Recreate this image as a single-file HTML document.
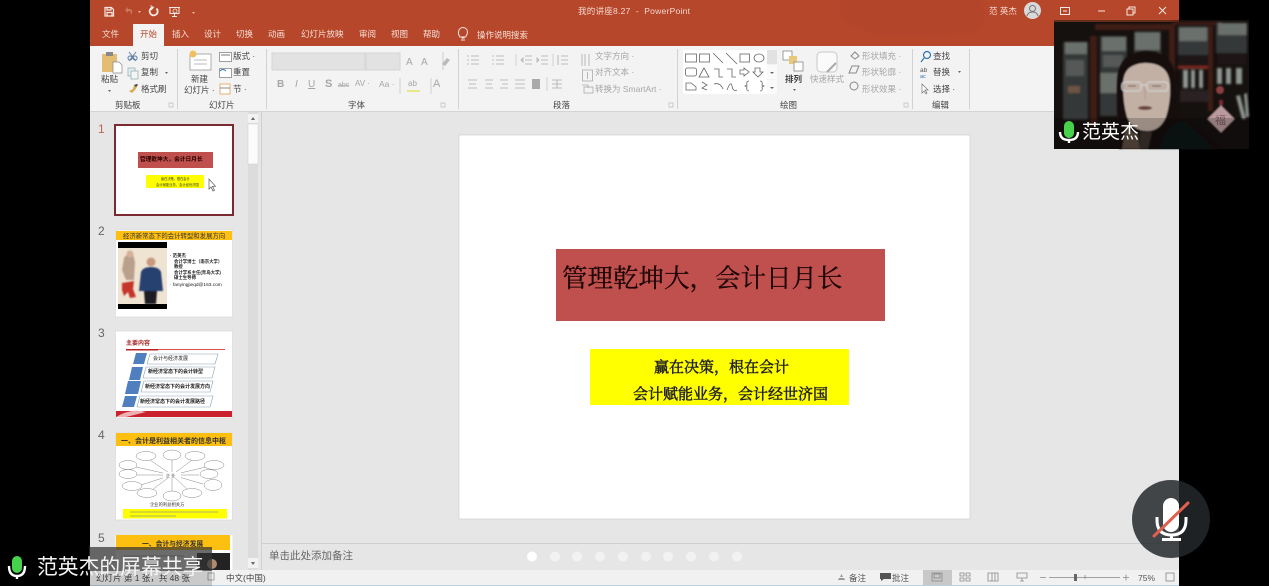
<!DOCTYPE html>
<html lang="zh">
<head>
<meta charset="utf-8">
<title>我的讲座8.27 - PowerPoint</title>
<style>
html,body{margin:0;padding:0;background:#000;width:1269px;height:586px;overflow:hidden}
svg{display:block;filter:blur(.35px)}
text{font-family:"Liberation Sans","Noto Sans CJK SC",sans-serif;white-space:pre}
.r text{font-size:8.5px;fill:#444}
.d text{font-size:8.5px;fill:#a6a6a6}
.g{fill:none;stroke:#666;stroke-width:.8}
.l{fill:none;stroke:#aaa;stroke-width:.8}
.t{fill:#f3d9d0;font-size:8.5px}
.n{fill:#666;font-size:12px}
.sf{font-family:"Noto Serif CJK SC",serif}
</style>
</head>
<body>
<svg width="1269" height="586" viewBox="0 0 1269 586" xmlns="http://www.w3.org/2000/svg">
<defs><filter id="b1"><feGaussianBlur stdDeviation="1"/></filter><filter id="b2"><feGaussianBlur stdDeviation=".8"/></filter></defs>
<rect width="1269" height="586" fill="#000"/>
<!-- app -->
<rect x="90" width="1089" height="586" fill="#e6e6e6"/>
<rect x="90" width="1089" height="46" fill="#b7472a"/>
<path d="M840 0h140q10 20-5 32q-70 6-100 2q-40-10-35-34z" fill="#b3452a" filter="url(#b1)"/>
<rect x="90" y="46" width="1089" height="65" fill="#f3f3f3"/>
<rect x="90" y="111" width="1089" height="1" fill="#d4d4d4"/>
<rect x="133" y="24" width="31" height="22" fill="#f3f3f3"/>

<!-- QAT -->
<g fill="none" stroke="#f5e8e2" stroke-width="1.2">
<path d="M105 7.500h6.500l2 2v6.500h-8.500z"/><path d="M107 7.500v2.500h4v-2.500M107 16v-3.500h5v3.500"/>
<path d="M156.500 8.500a4 4 0 1 1-4-1" stroke-width="1.800"/><path d="M150.500 5.500l3 2-2.500 2.500" stroke-width="1"/>
<path d="M169 7.500h11M170 7.500v6h9v-6M174.500 13.500v3M172 16.500h5" stroke-width="1"/>
</g>
<circle cx="175" cy="11" r="2" fill="none" stroke="#f5e8e2" stroke-width=".8"/>
<path d="M125 10l3-3v2h2q3 1 2 4l-1 2q0-4-2-4h-1v2z" fill="#c9765e"/>
<path d="M138 11h3l-1.500 2zM192 12h3l-1.500 2z" fill="#e8b8a8"/>
<text class="t" x="578" y="14" textLength="112" lengthAdjust="spacing">我的讲座8.27  -  PowerPoint</text>
<text class="t" x="989" y="14">范 英杰</text>
<circle cx="1032.500" cy="10.500" r="8.500" fill="#d9d9d9"/>
<circle cx="1032.500" cy="8.500" r="3" fill="none" stroke="#777"/>
<path d="M1027 16q1-4 5.500-4t5.500 4" fill="none" stroke="#777"/>
<g fill="none" stroke="#f5e8e2" stroke-width="1">
<rect x="1060.500" y="7.500" width="9" height="7"/>
<path d="M1063 11h4M1098 11h7"/>
<rect x="1127" y="9" width="6" height="6"/><path d="M1129 9V7h6v6h-2"/>
<path d="M1159 7l7 7M1166 7l-7 7"/>
</g>

<!-- tabs -->
<g font-size="8.500" fill="#f5dfd7">
<text x="102" y="37">文件</text><text x="172" y="37">插入</text><text x="204" y="37">设计</text><text x="236" y="37">切换</text>
<text x="268" y="37">动画</text><text x="301" y="37">幻灯片放映</text><text x="359" y="37">审阅</text><text x="391" y="37">视图</text>
<text x="423" y="37">帮助</text><text x="477" y="38">操作说明搜索</text>
</g>
<text x="140" y="37" font-size="8.500" fill="#b7472a">开始</text>
<path d="M461 40h4M461.500 38h3M460 37q-2-3-1.500-5a4.500 4.500 0 0 1 9 0q0 2-2 5z" fill="none" stroke="#f5e8e2"/>

<!-- ribbon separators -->
<g fill="#d2d2d2">
<rect x="177" y="49" width="1" height="60"/><rect x="266" y="49" width="1" height="60"/><rect x="458" y="49" width="1" height="60"/>
<rect x="677" y="49" width="1" height="60"/><rect x="912" y="49" width="1" height="60"/><rect x="969" y="49" width="1" height="60"/>
</g>

<!-- clipboard -->
<rect x="102" y="54" width="15" height="18" fill="#e3bd74"/><rect x="106" y="52" width="7" height="4" fill="#888"/>
<path d="M113 62h6l3 3v8h-9z" fill="#fff" stroke="#888" stroke-width=".7"/>
<path d="M129 52l7 9M136 52l-7 9" stroke="#5f7fa6" fill="none"/><circle cx="130" cy="58" r="2" fill="none" stroke="#5f7fa6"/><circle cx="135" cy="58" r="2" fill="none" stroke="#5f7fa6"/>
<rect x="128" y="68" width="7" height="8" fill="#e8eef4" stroke="#8aa" stroke-width=".7"/><rect x="131" y="71" width="7" height="8" fill="#f5f5f5" stroke="#8aa" stroke-width=".7"/>
<path d="M129 91l4-2 1-4 3 2-2 3-3 3z" fill="#d8ab4c"/><path d="M134 85l3-1 1 1-2 2z" fill="#444"/>
<g class="r">
<text x="141" y="59">剪切</text><text x="141" y="75">复制</text><text x="141" y="92">格式刷</text>
<text x="101" y="82">粘贴</text><text x="191" y="82">新建</text><text x="184" y="93">幻灯片 ·</text>
<text x="233" y="59">版式 ·</text><text x="233" y="75">重置</text><text x="233" y="92">节 ·</text>
<text x="115" y="108">剪贴板</text><text x="209" y="108">幻灯片</text><text x="348" y="108">字体</text>
<text x="553" y="108">段落</text><text x="780" y="108">绘图</text><text x="932" y="108">编辑</text>
<text x="933" y="59">查找</text><text x="933" y="75">替换</text><text x="933" y="92">选择 ·</text>
<text x="785" y="82" font-weight="bold">排列</text>
</g>
<path d="M165 72h3l-1.500 2zM108 90h3l-1.500 2zM958 71h3l-1.500 2zM793 89h3l-1.500 2z" fill="#666"/>

<!-- slides group -->
<rect x="190" y="54" width="21" height="16" fill="#fff" stroke="#999" stroke-width=".8"/><path d="M194 60h13M194 64h13" stroke="#bbb"/>
<circle cx="193" cy="54" r="3.500" fill="#f0c060"/>
<rect x="219.500" y="52.500" width="12" height="9" fill="#fff" stroke="#888" stroke-width=".8"/><rect x="221" y="54" width="9" height="2" fill="#bbb"/>
<rect x="219.500" y="68.500" width="12" height="9" fill="#fff" stroke="#888" stroke-width=".8"/><path d="M220 71q3-3 6 0" stroke="#2e75b6" fill="none"/>
<rect x="220" y="84" width="10" height="10" fill="#fff" stroke="#e0a050" stroke-width=".8"/><path d="M220 88h10" stroke="#888"/>

<!-- font group -->
<rect x="272" y="53" width="93" height="17" fill="#e2e2e2" stroke="#d6d6d6"/><rect x="366" y="53" width="34" height="17" fill="#e2e2e2" stroke="#d6d6d6"/>
<g class="d">
<text x="406" y="65" style="font-size:10px">A</text><text x="421" y="65" style="font-size:10px">A</text>
<text x="277" y="87" font-weight="bold" style="font-size:10px">B</text><text x="295" y="87" font-style="italic" style="font-size:10px">I</text>
<text x="308" y="87" style="font-size:10px" text-decoration="underline">U</text><text x="325" y="87" style="font-size:11px" font-weight="bold">S</text>
<text x="338" y="87" style="font-size:7px" text-decoration="line-through">abc</text><text x="355" y="86" style="font-size:8px">AV ·</text>
<text x="379" y="87">Aa ·</text><text x="408" y="86" style="font-size:8px">ab</text><text x="433" y="87" style="font-size:11px">A</text>
<text x="595" y="59">文字方向 ·</text><text x="595" y="75">对齐文本 ·</text><text x="595" y="92">转换为 SmartArt ·</text>
<text x="810" y="82">快速样式</text>
<text x="862" y="59">形状填充 ·</text><text x="862" y="75">形状轮廓 ·</text><text x="862" y="92">形状效果 ·</text>
</g>
<rect x="407" y="90" width="13" height="2" fill="#e8e88a"/>
<path d="M431 78v16M400 78v16M443 52v18" stroke="#cfcfcf" fill="none"/>
<path d="M442 64l5-6 3 2-5 6z" fill="#bbb"/>
<!-- paragraph -->
<g class="l">
<path d="M471 56h8M471 60h8M471 64h8M467 56h2M467 60h2M467 64h2"/>
<path d="M496 56h8M496 60h8M496 64h8M492 56h2M492 60h2M492 64h2"/>
<path d="M525 56h7M525 60h7M525 64h7M521 60l2-2v4zM541 56h7M541 60h7M541 64h7M537 58l2 2-2 2z"/>
<path d="M561 56h7M561 60h7M561 64h7M558 55v10"/>
<path d="M468 80h9M469 84h7M468 88h9M485 80h8M486 84h6M485 88h8M500 80h8M502 84h6M500 88h8M515 80h10M515 84h10M515 88h10M552 80h10M552 84h10M552 88h10M557 80v8"/>
<path d="M582 54v12M585 54v12M589 54v12"/>
<rect x="582.500" y="70" width="10" height="11"/><path d="M587.500 72v7"/>
<rect x="584" y="87" width="9" height="6"/><path d="M582 85h6v3"/>
</g>
<rect x="532" y="79" width="8" height="10" fill="#aaa"/>
<path d="M547 77v14M516 54v12M553 54v12" stroke="#d2d2d2"/>
<!-- gallery -->
<rect x="683" y="50" width="84" height="44" fill="#fff"/><rect x="767" y="50" width="10" height="14" fill="#e2e2e2"/><rect x="767" y="65" width="10" height="14" fill="#fafafa"/><rect x="767" y="80" width="10" height="14" fill="#fafafa"/>
<path d="M770 72h4l-2 2zM770 87h4l-2 2z" fill="#666"/>
<g class="g">
<rect x="685.500" y="54" width="11" height="8"/><rect x="699.500" y="54" width="10" height="8"/>
<path d="M713 53l10 10M726 53l11 11"/><rect x="740" y="54" width="9.500" height="8"/><ellipse cx="759" cy="58" rx="5" ry="4"/>
<rect x="685.500" y="68" width="11" height="8" rx="2"/><path d="M699 77l5-9 5 9zM714 69h5v8h4M727 69h5v8h4M740 70h4v-2l5 4-5 4v-2h-4zM755 68h5v4h3l-5 5-5-5h2z"/>
<path d="M686 90v-7h5l5 4v3zM702 82l5 3-5 3 5 2M714 84q6-2 9 5M727 90q4-10 5-4t5 4M749 81q-3 0-2 4l-2 1 2 1q-1 4 2 4M760 81q3 0 2 4l2 1-2 1q1 4-2 4"/>
</g>
<rect x="783" y="51" width="9" height="9" fill="#fff" stroke="#888" stroke-width=".8"/><rect x="789" y="56" width="8" height="8" fill="#e8c87c"/><rect x="794" y="62" width="9" height="9" fill="#fff" stroke="#888" stroke-width=".8"/>
<rect x="817" y="52" width="20" height="20" rx="4" fill="#fafafa" stroke="#c8c8c8"/><path d="M827 72l9-9" stroke="#aaa" stroke-width="2"/>
<path d="M851 56l4-4 4 4-4 3zM849 73l3-7h7l-3 7zM850 86a4 4 0 1 1 8 0a4 4 0 0 1-8 0" fill="none" stroke="#888"/>
<!-- edit -->
<circle cx="927" cy="55" r="3.500" fill="none" stroke="#2e75b6" stroke-width="1.200"/><path d="M924 58l-3 4" stroke="#2e75b6" stroke-width="1.200"/>
<text x="920" y="72" font-size="6.500" fill="#555">ab</text><text x="920" y="78" font-size="5.500" fill="#2e75b6">ac</text>
<path d="M922 84v9l2-2 2 3 1-1-2-3h3z" fill="#fff" stroke="#777" stroke-width=".7"/>
<path d="M169 103h4v4h-4zM441 103h4v4h-4zM669 103h4v4h-4zM904 103h4v4h-4z" fill="none" stroke="#bbb" stroke-width=".7"/>

<!-- thumbs pane -->
<rect x="248" y="112" width="10" height="458" fill="#dcdcdc"/>
<rect x="248" y="124" width="10" height="40" fill="#fbfbfb" stroke="#cfcfcf" stroke-width=".5"/>
<rect x="248" y="114" width="10" height="9" fill="#f2f2f2"/><path d="M251 120l2-3 2 3z" fill="#666"/>
<rect x="248" y="558" width="10" height="10" fill="#f2f2f2"/><path d="M251 562l2 3 2-3z" fill="#666"/>
<rect x="261" y="112" width="1" height="458" fill="#d0d0d0"/>

<text x="98" y="133" class="n" style="fill:#c0654d">1</text><text x="98" y="235" class="n">2</text><text x="98" y="337" class="n">3</text><text x="98" y="439" class="n">4</text><text x="98" y="542" class="n">5</text>

<!-- thumb 1 -->
<rect x="115" y="125" width="118" height="90" fill="#fff" stroke="#7a2a30" stroke-width="2"/>
<rect x="138" y="152" width="75" height="16" fill="#c0504d"/>
<text x="140" y="161" font-size="5.700" font-weight="bold" fill="#200">管理乾坤大，会计日月长</text>
<rect x="146" y="175" width="58" height="13" fill="#ffff00"/>
<text x="161" y="180" font-size="3.200" fill="#333">赢在决策，根在会计</text>
<text x="156" y="186" font-size="3.300" fill="#333">会计赋能业务，会计经世济国</text>
<path d="M209 179v10l2-2 2 4 1.500-.7-2-4h3z" fill="#fff" stroke="#555" stroke-width=".7"/>

<!-- thumb 2 -->
<rect x="115.500" y="230" width="117" height="87" fill="#fff" stroke="#d6d6d6" stroke-width=".6"/>
<rect x="116" y="231" width="116" height="9" fill="#fdbf10"/>
<text x="123" y="238" font-size="6.400" fill="#333">经济新常态下的会计转型和发展方向</text>
<rect x="118" y="242" width="49" height="6" fill="#000"/>
<rect x="118" y="248" width="49" height="56" fill="#efe4d2"/>
<rect x="118" y="304" width="49" height="5" fill="#000"/>
<g filter="url(#b2)">
<path d="M124 258q4-6 9-4l2 8-1 18h-8l-4-10z" fill="#b9a08d"/>
<circle cx="130" cy="254" r="3.500" fill="#d5b09a"/>
<path d="M122 283l12-2-1 8 3 8-6 1-2-6-4 4-2-6z" fill="#c5352b"/>
<circle cx="151" cy="262" r="4.500" fill="#c79a80"/>
<path d="M141 272q2-5 10-5t10 5l2 19h-24z" fill="#26406f"/>
<path d="M144 291h13l-1 13h-11z" fill="#1e1e24"/>
</g>
<g font-size="4.400" fill="#222" font-weight="bold">
<text x="170" y="257">· 范英杰</text>
<text x="174" y="263">会计学博士（南京大学）</text>
<text x="174" y="268">教授</text>
<text x="174" y="274">会计学系主任(青岛大学)</text>
<text x="174" y="279">硕士生导师</text>
<text x="170" y="286" font-weight="normal" font-size="4.800">· fanyingjieqd@163.com</text>
</g>

<!-- thumb 3 -->
<rect x="115.500" y="331" width="117" height="87" fill="#fff" stroke="#d6d6d6" stroke-width=".6"/>
<text x="126" y="345" font-size="6" font-weight="bold" fill="#a52a2a">主要内容</text>
<rect x="126" y="349" width="99" height="1" fill="#d65050"/><rect x="126" y="349" width="32" height="1.500" fill="#b22"/>
<g fill="#4f7fbf">
<path d="M136 353h11l-3 11h-11z"/><path d="M132 367h11l-3 13h-11z"/><path d="M128 381h13l-3 13h-13z"/><path d="M125 396h12l-3 11h-12z"/>
</g>
<g fill="#fff" stroke="#8aa0b8" stroke-width=".6">
<path d="M150 354h68l-3 10h-68z"/><path d="M146 367h69l-3 11h-69z"/><path d="M144 381h69l-3 11h-69z"/><path d="M140 396h73l-3 11h-73z"/>
</g>
<g font-size="5" fill="#222" font-weight="bold">
<text x="153" y="360" font-weight="normal">会计与经济发展</text><text x="148" y="373">新经济常态下的会计转型</text><text x="145" y="388">新经济常态下的会计发展方向</text><text x="140" y="403">新经济常态下的会计发展路径</text>
</g>
<rect x="116" y="411" width="116" height="6" fill="#c9222e"/><path d="M116 417q15-9 30-5l-20 5z" fill="#eeb0b0"/>

<!-- thumb 4 -->
<rect x="115.500" y="433" width="117" height="87" fill="#fff" stroke="#d6d6d6" stroke-width=".6"/>
<rect x="116" y="433" width="116" height="13" fill="#fdbf10"/>
<text x="121" y="443" font-size="7" font-weight="bold" fill="#333">一、会计是利益相关者的信息中枢</text>
<g fill="#fff" stroke="#888" stroke-width=".5">
<path d="M172 475V460M172 475L150 460M172 475L192 460M172 475L136 467M172 475L206 467M172 475H136M172 475H199M172 475L141 485M172 475L203 484M172 475L152 490M172 475V491M172 475L188 490" fill="none"/>
<ellipse cx="172" cy="455" rx="9" ry="5"/><ellipse cx="146" cy="456" rx="10" ry="4.500"/><ellipse cx="195" cy="456" rx="10" ry="4.500"/>
<ellipse cx="128" cy="465" rx="9" ry="4.500"/><ellipse cx="214" cy="465" rx="10" ry="4.500"/><ellipse cx="128" cy="474" rx="9" ry="4.500"/>
<ellipse cx="209" cy="474" rx="9" ry="4.500"/><ellipse cx="132" cy="486" rx="10" ry="4.500"/><ellipse cx="213" cy="485" rx="9" ry="5.500"/>
<ellipse cx="147" cy="493" rx="10" ry="4.500"/><ellipse cx="172" cy="496" rx="9" ry="5"/><ellipse cx="192" cy="493" rx="10" ry="4.500"/>
</g>
<rect x="163" y="472" width="18" height="6" fill="#fff"/>
<text x="166" y="477" font-size="4" fill="#333">企 业</text>
<text x="150" y="506" font-size="4.300" fill="#333">企业的利益相关方</text>
<rect x="123" y="509" width="104" height="9.500" fill="#ffff00"/>
<path d="M130 512h88M130 516h46" stroke="#998" stroke-width=".7"/>

<!-- thumb 5 -->
<rect x="115.500" y="535" width="117" height="35" fill="#fff"/>
<rect x="116" y="535" width="114" height="15" fill="#fdbf10"/>
<text x="142" y="546" font-size="6.800" font-weight="bold" fill="#333">一、会计与经济发展</text>
<rect x="197" y="553" width="33" height="17" fill="#222"/><circle cx="212" cy="564" r="5" fill="#b08a70"/>
<path d="M124 556h60" stroke="#aaa"/>

<!-- slide -->
<rect x="459" y="135" width="511" height="384" fill="#fff" stroke="#d4d4d4" stroke-width=".8"/>
<rect x="556" y="249" width="329" height="72" fill="#c0504d"/>
<text class="sf" x="562" y="287" font-size="25.500" fill="#1c0505" stroke="#1c0505" stroke-width=".3">管理乾坤大，会计日月长</text>
<rect x="590" y="349" width="259" height="56" fill="#ffff00"/>
<text class="sf" x="654" y="372" font-size="15" fill="#222" stroke="#222" stroke-width=".5">赢在决策，根在会计</text>
<text class="sf" x="633" y="399" font-size="15" fill="#222" stroke="#222" stroke-width=".5">会计赋能业务，会计经世济国</text>

<!-- notes -->
<rect x="262" y="543" width="917" height="1" fill="#cfcfcf"/>
<text x="269" y="559" font-size="10.500" fill="#666">单击此处添加备注</text>
<g fill="#f2f2f2">
<circle cx="532" cy="556.500" r="5" fill="#fff"/><circle cx="555" cy="556.500" r="5"/><circle cx="577" cy="556.500" r="5"/><circle cx="600" cy="556.500" r="5"/><circle cx="623" cy="556.500" r="5"/>
<circle cx="646" cy="556.500" r="5"/><circle cx="668" cy="556.500" r="5"/><circle cx="691" cy="556.500" r="5"/><circle cx="714" cy="556.500" r="5"/><circle cx="737" cy="556.500" r="5"/>
</g>

<!-- status bar -->
<rect x="90" y="570" width="1089" height="15" fill="#f1f1f1"/>
<rect x="90" y="585" width="1089" height="1" fill="#b5d0e0"/>
<text x="96" y="581" font-size="8.500" fill="#444">幻灯片 第 1 张，共 48 张</text>
<rect x="208" y="573" width="6" height="7" fill="none" stroke="#888" stroke-width=".7"/>
<text x="226" y="581" font-size="8.500" fill="#444">中文(中国)</text>
<path d="M838 580h7l-1-2h-5zM840 577h3l-1.500-3z" fill="#999"/>
<text x="849" y="581" font-size="8.500" fill="#555">备注</text>
<path d="M880 573h11v6h-7l-3 2v-2h-1z" fill="#555"/>
<text x="892" y="581" font-size="8.500" fill="#555">批注</text>
<rect x="923" y="570" width="29" height="15" fill="#c8c8c8"/>
<g fill="none" stroke="#888" stroke-width=".8">
<rect x="932" y="573" width="10" height="8"/><rect x="934" y="574" width="6" height="4"/>
<path d="M960 573h4v3h-4zM966 573h4v3h-4zM960 578h4v3h-4zM966 578h4v3h-4z"/>
<path d="M988 573h10v8h-10zM992 573v8M995 573v8"/>
<path d="M1017 573h10v5h-10zM1022 578v3M1020 581h4"/>
<path d="M1040 577.500h6M1049 577.500h71M1085 575v4M1123 577.500h6M1126 574.500v6"/>
<rect x="1166" y="573" width="8" height="8"/>
</g>
<rect x="1074" y="574" width="3" height="7" fill="#666"/>
<text x="1138" y="581" font-size="8.500" fill="#555">75%</text>

<!-- overlay bottom left -->
<rect x="89" y="547" width="123" height="24" fill="#333" opacity=".72"/>
<rect x="89" y="571" width="123" height="15" fill="#000" opacity=".16"/>
<text x="37" y="574" font-size="20.800" fill="#f4f4f4">范英杰的屏幕共享</text>
<rect x="12" y="556" width="10" height="17" rx="5" fill="#46d24a"/>
<path d="M9 566q0 10 8 10t8-10M17 576v3" fill="none" stroke="#fff" stroke-width="2.400"/>

<!-- video -->
<rect x="1054" y="20" width="195" height="129" fill="#15110f"/>
<rect x="1054" y="20" width="125" height="2" fill="#b7472a" opacity=".5"/>
<g filter="url(#b1)">
<g fill="#3f1b14">
<rect x="1090" y="36" width="7" height="90"/><rect x="1095" y="24" width="75" height="6"/><rect x="1169" y="24" width="6" height="90"/><rect x="1172" y="22" width="50" height="3"/>
<rect x="1208" y="26" width="5" height="85"/><rect x="1178" y="66" width="30" height="3" fill="#7a2a20"/>
</g>
<g fill="#343937">
<rect x="1063" y="42" width="25" height="78"/><rect x="1100" y="36" width="27" height="80"/><rect x="1134" y="32" width="27" height="24"/>
<rect x="1178" y="27" width="30" height="28"/><rect x="1216" y="23" width="31" height="30"/>
</g>
<g fill="#6a706c">
<rect x="1065" y="42" width="22" height="12"/><rect x="1102" y="37" width="24" height="14"/><rect x="1135" y="32" width="25" height="18"/><rect x="1179" y="27" width="28" height="14"/><rect x="1218" y="23" width="29" height="12"/>
<rect x="1100" y="73" width="20" height="20"/>
<rect x="1066" y="60" width="18" height="16" opacity=".6"/><rect x="1103" y="55" width="20" height="12" opacity=".6"/>
</g>
<rect x="1068" y="86" width="12" height="7" fill="#6d5545"/>
<g fill="#1a1513"><rect x="1178" y="55" width="30" height="11"/><rect x="1217" y="53" width="30" height="12"/></g>
<g fill="#8f9793">
<rect x="1183" y="70" width="5" height="18"/><rect x="1191" y="70" width="4" height="18"/><rect x="1199" y="70" width="4" height="18"/>
<rect x="1217" y="68" width="5" height="16"/><rect x="1226" y="68" width="5" height="16"/><rect x="1236" y="68" width="6" height="16"/>
<path d="M1236 96l4-1 6 24h-4zM1244 94l3-1 2 24h-3z"/>
</g>
<rect x="1180" y="90" width="30" height="12" fill="#2a2422"/>
</g>
<g filter="url(#b2)">
<path d="M1119 149q-3-40-2-68q1-29 29-30q27 0 31 30l1 28q4 12 14 16q18 8 30 24z" fill="#141110"/>
<path d="M1123 84q0-20 22-21q24 0 25 22q1 16-4 32q-6 14-19 14q-14 0-20-14q-4-14-4-33z" fill="#c2b0a4"/>
<path d="M1126 124q5 9 12 10l2 15h-18z" fill="#5a4b41"/>
<path d="M1140 132h12l-4 17h-8z" fill="#3e332d"/>
<ellipse cx="1145" cy="108" rx="7" ry="2" fill="#6a4540"/>
<g fill="none" stroke="#d6d8d8" stroke-width="1"><rect x="1122" y="82" width="19" height="9" rx="3"/><rect x="1147" y="82" width="21" height="9" rx="3"/><path d="M1141 85h6"/></g>
<path d="M1128 86h8M1152 86h9" stroke="#5a4b44"/>
<path d="M1145 88v12" stroke="#ab9888"/>
<path d="M1160 149q6-25 22-28q14 8 31 28z" fill="#101619"/>
<path d="M1221 105l14 14-14 14-14-14z" fill="#ba9a9c"/>
<path d="M1219 100h4v5h-4z" fill="#7c2730"/><circle cx="1220" cy="90" r="4" fill="#8a4040"/>
</g>
<text x="1215" y="124" font-size="11" fill="#7a5a5c">福</text>
<rect x="1054" y="118" width="195" height="31" fill="#000" opacity=".2"/>
<rect x="1064" y="121" width="10" height="17" rx="5" fill="#46d24a"/>
<path d="M1060 132q0 8 9 8t9-8M1069 140v3" fill="none" stroke="#fff" stroke-width="2.400"/>
<text x="1082" y="138" font-size="19" fill="#fff">范英杰</text>

<!-- mute button -->
<circle cx="1171" cy="519" r="39" fill="#24282b" opacity=".85"/>
<rect x="1163" y="498" width="16" height="34" rx="8" fill="#fff"/>
<path d="M1157 517v3q0 15 14.500 15t14.500-15v-3M1171.500 535v4M1162 539.500h19" fill="none" stroke="#fff" stroke-width="3"/>
<path d="M1154 536l34-33" stroke="#e0604f" stroke-width="3" stroke-linecap="round"/>
</svg>
</body>
</html>
